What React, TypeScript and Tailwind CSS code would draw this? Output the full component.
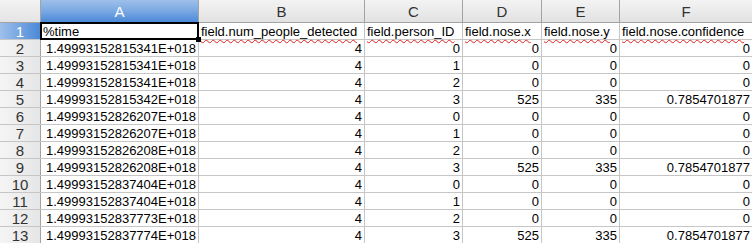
const cols = ['A', 'B', 'C', 'D', 'E', 'F'];
const heads = [
  '%time',
  'field.num_people_detected',
  'field.person_ID',
  'field.nose.x',
  'field.nose.y',
  'field.nose.confidence',
];

const times = [
  '1.49993152815341E+018',
  '1.49993152815341E+018',
  '1.49993152815341E+018',
  '1.49993152815342E+018',
  '1.49993152826207E+018',
  '1.49993152826207E+018',
  '1.49993152826208E+018',
  '1.49993152826208E+018',
  '1.49993152837404E+018',
  '1.49993152837404E+018',
  '1.49993152837773E+018',
  '1.49993152837774E+018',
];

const rows = times.map((t, i) => {
  const id = i % 4;
  const hit = id === 3;
  return [t, '4', String(id), hit ? '525' : '0', hit ? '335' : '0', hit ? '0.7854701877' : '0'];
});

// fixed single track so every row keeps its exact pixel height
const grid = 'grid grid-rows-[100%] grid-cols-[41px_158px_166px_98px_79px_78px_1fr] leading-none';

export default function App() {
  return (
    <div className="w-[752px] h-[243px] overflow-hidden bg-white text-black font-['Liberation_Sans',Arial,sans-serif]">
      {/* column header strip */}
      <div className={`${grid} h-[23px] border-b border-[#a3a3a3]`}>
        <div className="border-r border-[#a3a3a3] bg-linear-to-b from-[#f3f3f3] to-[#e4e4e4]" />
        {cols.map((c, i) => (
          <div
            key={c}
            className={`flex items-center justify-center text-[15px] ${
              i === 0
                ? 'bg-linear-to-b from-[#9ec0ea] via-[#7aa8e2] to-[#4a89d8] text-white'
                : 'bg-linear-to-b from-[#f3f3f3] to-[#e2e2e2] text-[#333]'
            } ${i < cols.length - 1 ? 'border-r border-[#a3a3a3]' : ''}`}
          >
            {c}
          </div>
        ))}
      </div>

      {/* header row */}
      <div className={`${grid} h-[17px] border-b border-[#c6c6c6]`}>
        <div className="flex items-center justify-center text-[15px] text-white border-r border-[#a3a3a3] bg-linear-to-r from-[#9ec0ea] to-[#4a89d8]">
          1
        </div>
        {heads.map((h, i) => (
          <div
            key={h}
            className={`relative flex items-center pl-[2px] text-[13px] whitespace-nowrap ${
              i < heads.length - 1 ? 'border-r border-[#c6c6c6]' : ''
            }`}
          >
            <span
              className={
                i === 0
                  ? ''
                  : 'underline decoration-wavy decoration-[#e02020] decoration-1 underline-offset-[3px]'
              }
            >
              {h}
            </span>
            {i === 0 && (
              <>
                <div className="absolute -left-px -top-px -right-px -bottom-px border-2 border-black pointer-events-none" />
                <div className="absolute -right-[3px] -bottom-[3px] w-[5px] h-[5px] bg-black" />
              </>
            )}
          </div>
        ))}
      </div>

      {rows.map((r, ri) => (
        <div key={ri} className={`${grid} h-[17px] border-b border-[#c6c6c6]`}>
          <div className="flex items-center justify-center text-[15px] text-[#333] border-r border-[#a3a3a3] bg-linear-to-r from-[#f5f5f5] to-[#e6e6e6]">
            {ri + 2}
          </div>
          {r.map((v, ci) => (
            <div
              key={ci}
              className={`flex items-center justify-end pr-[2px] text-[13px] ${
                ci < r.length - 1 ? 'border-r border-[#c6c6c6]' : ''
              }`}
            >
              {v}
            </div>
          ))}
        </div>
      ))}
    </div>
  );
}
